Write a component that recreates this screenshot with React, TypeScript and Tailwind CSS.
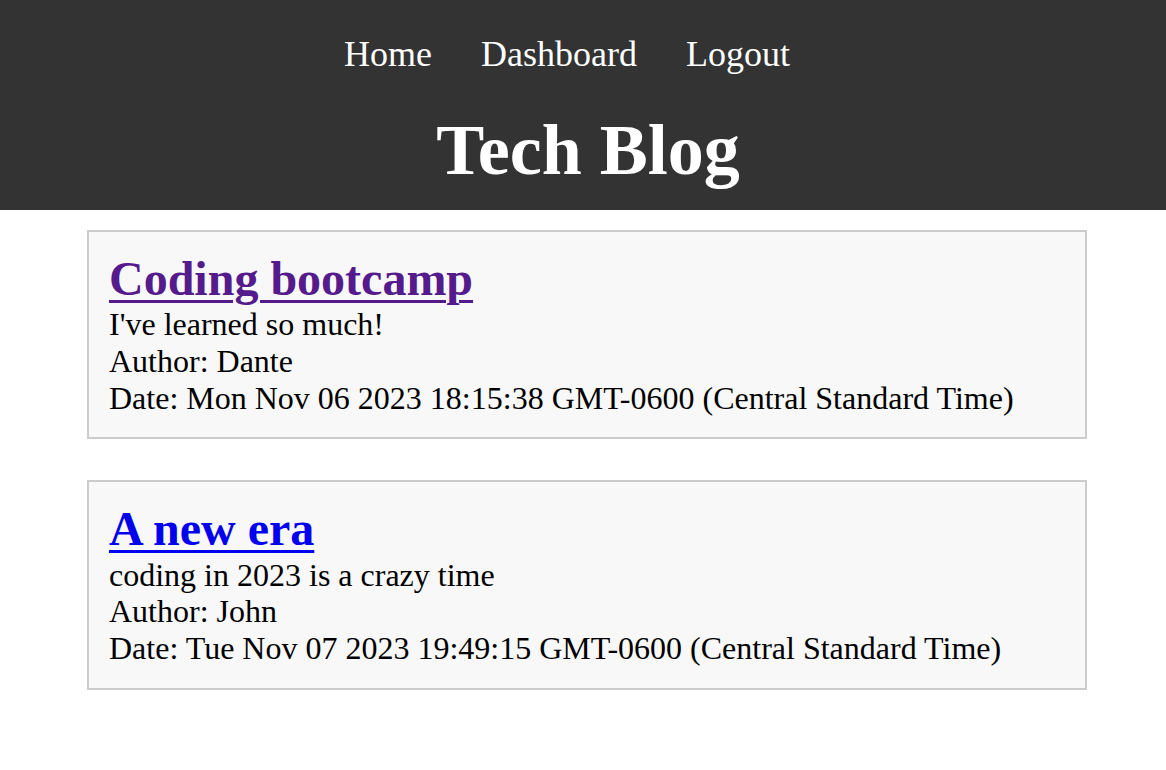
import React from "react";

const posts = [
  {
    title: "Coding bootcamp",
    body: "I've learned so much!",
    author: "Dante",
    date: "Mon Nov 06 2023 18:15:38 GMT-0600 (Central Standard Time)",
    visited: true,
  },
  {
    title: "A new era",
    body: "coding in 2023 is a crazy time",
    author: "John",
    date: "Tue Nov 07 2023 19:49:15 GMT-0600 (Central Standard Time)",
    visited: false,
  },
];

export default function App() {
  return (
    <div
      className="min-h-[770px] bg-white text-black"
      style={{ fontFamily: '"Liberation Serif", "Times New Roman", serif' }}
    >
      <header className="h-[210px] bg-[#333333] text-white pt-[34px]">
        <nav className="flex justify-center gap-[49px] pr-[32px] text-[36px] leading-[1.149]">
          <a href="#" className="text-white no-underline">Home</a>
          <a href="#" className="text-white no-underline">Dashboard</a>
          <a href="#" className="text-white no-underline">Logout</a>
        </nav>
        <h1 className="mt-[34px] pl-[10px] text-center text-[72px] font-bold leading-[1.149]">
          Tech Blog
        </h1>
      </header>
      <main className="pt-[20px]">
        {posts.map((p) => (
          <div
            key={p.title}
            className="ml-[87px] mb-[41px] w-[1000px] border-2 border-[#cccccc] bg-[#f8f8f8] px-[20px] pt-[19px] pb-[21px]"
          >
            <h2 className="text-[48px] font-bold leading-[1.149]">
              <a
                href="#"
                className={
                  p.visited
                    ? "text-[#551a8b] underline decoration-[3px] underline-offset-[5px]"
                    : "text-[#0000ee] underline decoration-[3px] underline-offset-[5px]"
                }
              >
                {p.title}
              </a>
            </h2>
            <p className="text-[32px] leading-[1.149]">{p.body}</p>
            <p className="text-[32px] leading-[1.149]">Author: {p.author}</p>
            <p className="text-[32px] leading-[1.149]">Date: {p.date}</p>
          </div>
        ))}
      </main>
    </div>
  );
}
